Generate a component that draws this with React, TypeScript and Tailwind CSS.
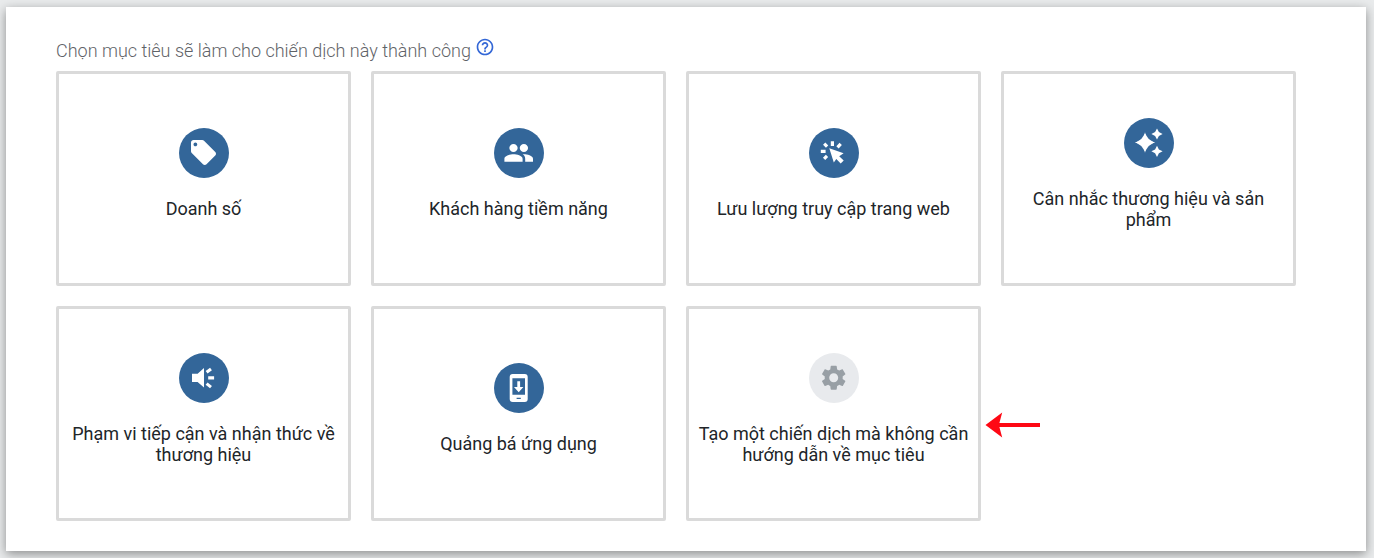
import type { ReactNode } from "react";

type Goal = {
  label: string;
  icon: ReactNode;
  muted?: boolean;
  highlighted?: boolean;
};

const TagIcon = (
  <g transform="translate(9.5 9.5) scale(1.25)">
    <path d="M21.41 11.58l-9-9C12.05 2.22 11.55 2 11 2H4c-1.1 0-2 .9-2 2v7c0 .55.22 1.05.59 1.42l9 9c.36.36.86.58 1.41.58.55 0 1.05-.22 1.41-.59l7-7c.37-.36.59-.86.59-1.41 0-.55-.23-1.06-.59-1.42zM5.5 7C4.67 7 4 6.33 4 5.5S4.67 4 5.5 4 7 4.67 7 5.5 6.33 7 5.5 7z" />
  </g>
);

const PeopleIcon = (
  <g transform="translate(9.1 10) scale(1.3 1.25)">
    <path d="M16 11.2c1.75 0 3.2-1.43 3.2-3.2S17.75 4.8 16 4.8 12.8 6.23 12.8 8s1.45 3.2 3.2 3.2zm-8 0c1.75 0 3.2-1.43 3.2-3.2S9.75 4.8 8 4.8 4.8 6.23 4.8 8 6.25 11.2 8 11.2zM8 13c-2.33 0-7 1.17-7 3.5V19h14v-2.5c0-2.33-4.67-3.5-7-3.5zm8 0c-.29 0-.62.02-.97.05 1.16.84 1.97 1.97 1.97 3.45V19h6v-2.5c0-2.33-4.67-3.5-7-3.5z" />
  </g>
);

const ClickIcon = (
  <>
    <path d="M20.3 20.3 34.6 25.3 30.2 28.2 34.7 32.6 31.7 35.6 27.3 31.1 24.8 34.6z" />
    <path
      d="M23.4 13.2v4.8M31.7 15.9l-3.2 3.4M15.2 15.6l2.9 3M11.8 23.4h4.8M15.1 30.9l2.9-3"
      stroke="currentColor"
      strokeWidth="3.2"
    />
  </>
);

const SparklesIcon = (
  <>
    <path d="M21 14.2Q22.4 23 31.2 24.5 22.4 26 21 34.8 19.6 26 10.8 24.5 19.6 23 21 14.2z" />
    <path
      d="M21 16 24.4 21.1 29.5 24.5 24.4 27.9 21 33 17.6 27.9 12.5 24.5 17.6 21.1z"
      stroke="currentColor"
      strokeWidth="0.5"
    />
    <path d="M33 10.4 34.9 14.1 38.6 16 34.9 17.9 33 21.6 31.1 17.9 27.4 16 31.1 14.1z" />
    <path d="M33 27.7 34.9 31.4 38.6 33.3 34.9 35.2 33 38.9 31.1 35.2 27.4 33.3 31.1 31.4z" />
  </>
);

const MegaphoneIcon = (
  <>
    <path d="M13 20.7h5.6L25 15v19.6L18.6 29H13z" />
    <path d="M27.6 19.3l4.4-3.3M29.2 24.9h5.9M27.6 30.6l4.4 3.5" stroke="currentColor" strokeWidth="3.1" />
  </>
);

const PhoneIcon = (
  <>
    <path
      fillRule="evenodd"
      d="M18.7 11h12a3 3 0 0 1 3 3v22a3 3 0 0 1-3 3h-12a3 3 0 0 1-3-3V14a3 3 0 0 1 3-3zM18.4 15.2v16.6H31V15.2zM22.6 34.8v1.2h4.2v-1.2z"
    />
    <path d="M23.3 18.3h2.8v5.7h3.3l-4.7 5.2-4.7-5.2h3.3z" />
  </>
);

const GearIcon = (
  <g transform="translate(9.7 9.7) scale(1.25)">
    <path d="M19.14 12.94c.04-.3.06-.61.06-.94 0-.32-.02-.64-.07-.94l2.03-1.58c.18-.14.23-.41.12-.61l-1.92-3.32c-.12-.22-.37-.29-.59-.22l-2.39.96c-.5-.38-1.03-.7-1.62-.94L14.4 2.81c-.04-.24-.24-.41-.48-.41h-3.84c-.24 0-.43.17-.47.41L9.25 5.35c-.59.24-1.13.57-1.62.94l-2.39-.96c-.22-.08-.47 0-.59.22L2.74 8.87c-.12.21-.08.47.12.61l2.03 1.58c-.05.3-.09.63-.09.94s.02.64.07.94l-2.03 1.58c-.18.14-.23.41-.12.61l1.92 3.32c.12.22.37.29.59.22l2.39-.96c.5.38 1.03.7 1.62.94l.36 2.54c.05.24.24.41.48.41h3.84c.24 0 .44-.17.47-.41l.36-2.54c.59-.24 1.13-.56 1.62-.94l2.39.96c.22.08.47 0 .59-.22l1.92-3.32c.12-.22.07-.47-.12-.61l-2.01-1.58zM12 15.6c-1.98 0-3.6-1.62-3.6-3.6s1.62-3.6 3.6-3.6 3.6 1.62 3.6 3.6-1.62 3.6-3.6 3.6z" />
  </g>
);

const goals: Goal[] = [
  { label: "Doanh số", icon: TagIcon },
  { label: "Khách hàng tiềm năng", icon: PeopleIcon },
  { label: "Lưu lượng truy cập trang web", icon: ClickIcon },
  { label: "Cân nhắc thương hiệu và sản phẩm", icon: SparklesIcon },
  { label: "Phạm vi tiếp cận và nhận thức về thương hiệu", icon: MegaphoneIcon },
  { label: "Quảng bá ứng dụng", icon: PhoneIcon },
  {
    label: "Tạo một chiến dịch mà không cần hướng dẫn về mục tiêu",
    icon: GearIcon,
    muted: true,
    highlighted: true,
  },
];

function GoalCard({ label, icon, muted, highlighted }: Goal) {
  return (
    <li className="relative">
      <button
        type="button"
        className="flex min-h-[215px] w-full cursor-pointer flex-col items-center justify-center gap-5 rounded-xs border-3 border-[#dadada] bg-white px-1.5 pb-2.5 text-center text-lg leading-[21px] text-[#212529]"
      >
        <span
          className={
            muted
              ? "size-[50px] rounded-full bg-[#e8eaed] text-[#989fa5]"
              : "size-[50px] rounded-full bg-[#336699] text-white"
          }
        >
          <svg viewBox="0 0 50 50" className="size-full" fill="currentColor" aria-hidden="true">
            {icon}
          </svg>
        </span>
        <span>{label}</span>
      </button>
      {highlighted && (
        <svg
          viewBox="0 0 55 26"
          className="absolute top-[106px] left-full ml-1 h-[26px] w-[55px] text-[#fe0814]"
          fill="currentColor"
          aria-hidden="true"
        >
          <path d="M0.5 13 17.2 0.5 14.4 11H55v4H14.4L17.2 25.5z" />
        </svg>
      )}
    </li>
  );
}

export default function App() {
  return (
    <div className="min-h-screen bg-[#e9ebec] px-2 py-[7px] pl-1.5 font-[Roboto,'Noto_Sans',sans-serif]">
      <main className="bg-white pt-8 pr-[70px] pb-[30px] pl-[50px] shadow-[0_3px_10px_rgba(0,0,0,0.4)]">
        <header className="flex h-8 items-start gap-1">
          <h1 className="text-lg leading-[23px] font-light text-[#5f6368]">
            Chọn mục tiêu sẽ làm cho chiến dịch này thành công
          </h1>
          <button type="button" aria-label="Trợ giúp" className="-mt-0.5 cursor-pointer text-[#3367d6]">
            <svg viewBox="0 0 24 24" className="size-5" fill="currentColor" aria-hidden="true">
              <path d="M11 18h2v-2h-2v2zm1-16C6.48 2 2 6.48 2 12s4.48 10 10 10 10-4.48 10-10S17.52 2 12 2zm0 18c-4.41 0-8-3.59-8-8s3.59-8 8-8 8 3.59 8 8-3.59 8-8 8zm0-14c-2.21 0-4 1.79-4 4h2c0-1.1.9-2 2-2s2 .9 2 2c0 2-3 1.75-3 5h2c0-2.25 3-2.5 3-5 0-2.21-1.79-4-4-4z" />
            </svg>
          </button>
        </header>
        <ul className="grid grid-cols-4 gap-5">
          {goals.map((goal) => (
            <GoalCard key={goal.label} {...goal} />
          ))}
        </ul>
      </main>
    </div>
  );
}
